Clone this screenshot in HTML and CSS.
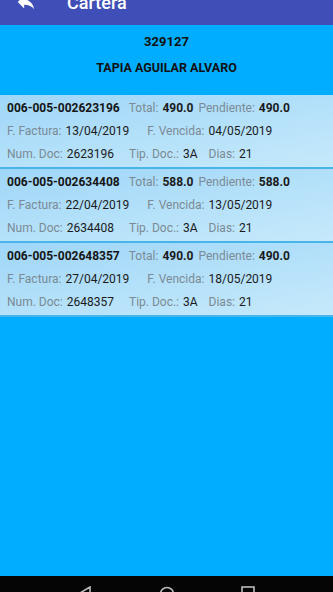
FILE: index.html
```
<!DOCTYPE html>
<html>
<head>
<meta charset="utf-8">
<link rel="stylesheet" href="styles.css">
</head>
<body>
<div class="screen">
  <header class="toolbar">
    <svg class="back" width="22" height="22" viewBox="0 0 24 24"><path d="M10 9V5l-7 7 7 7v-4.1c5 0 8.5 1.6 11 5.1-1-5-4-10-11-11z" fill="#fff"/></svg>
    <span class="title">Cartera</span>
  </header>
  <main class="content">
    <div class="client">
      <div class="client-id">329127</div>
      <div class="client-name">TAPIA AGUILAR ALVARO</div>
    </div>
    <div class="list">
      <div class="card">
        <div class="row">
          <span class="code">006-005-002623196</span>
          <span class="lbl m1">Total:</span><span class="val b">490.0</span>
          <span class="lbl m2">Pendiente:</span><span class="val b">490.0</span>
        </div>
        <div class="row">
          <span class="lbl">F. Factura:</span><span class="val">13/04/2019</span>
          <span class="lbl m3">F. Vencida:</span><span class="val">04/05/2019</span>
        </div>
        <div class="row">
          <span class="lbl">Num. Doc:</span><span class="val">2623196</span>
          <span class="lbl m4">Tip. Doc.:</span><span class="val">3A</span>
          <span class="lbl m5">Dias:</span><span class="val">21</span>
        </div>
      </div>
      <div class="card">
        <div class="row">
          <span class="code">006-005-002634408</span>
          <span class="lbl m1">Total:</span><span class="val b">588.0</span>
          <span class="lbl m2">Pendiente:</span><span class="val b">588.0</span>
        </div>
        <div class="row">
          <span class="lbl">F. Factura:</span><span class="val">22/04/2019</span>
          <span class="lbl m3">F. Vencida:</span><span class="val">13/05/2019</span>
        </div>
        <div class="row">
          <span class="lbl">Num. Doc:</span><span class="val">2634408</span>
          <span class="lbl m4">Tip. Doc.:</span><span class="val">3A</span>
          <span class="lbl m5">Dias:</span><span class="val">21</span>
        </div>
      </div>
      <div class="card">
        <div class="row">
          <span class="code">006-005-002648357</span>
          <span class="lbl m1">Total:</span><span class="val b">490.0</span>
          <span class="lbl m2">Pendiente:</span><span class="val b">490.0</span>
        </div>
        <div class="row">
          <span class="lbl">F. Factura:</span><span class="val">27/04/2019</span>
          <span class="lbl m3">F. Vencida:</span><span class="val">18/05/2019</span>
        </div>
        <div class="row">
          <span class="lbl">Num. Doc:</span><span class="val">2648357</span>
          <span class="lbl m4">Tip. Doc.:</span><span class="val">3A</span>
          <span class="lbl m5">Dias:</span><span class="val">21</span>
        </div>
      </div>
    </div>
  </main>
  <nav class="navbar">
    <svg class="nav-icon" width="14" height="14" viewBox="0 0 14 14"><path d="M12 1 L2 7 L12 13 Z" fill="none" stroke="#bbb" stroke-width="1.6"/></svg>
    <svg class="nav-icon" width="16" height="16" viewBox="0 0 16 16"><circle cx="8" cy="8" r="6.5" fill="none" stroke="#bbb" stroke-width="1.6"/></svg>
    <svg class="nav-icon" width="14" height="14" viewBox="0 0 14 14"><rect x="1" y="1" width="12" height="12" fill="none" stroke="#bbb" stroke-width="1.6"/></svg>
  </nav>
</div>
</body>
</html>
```
FILE: styles.css
```
* { box-sizing: border-box; }
html, body { margin: 0; padding: 0; }
body {
  width: 333px;
  height: 592px;
  overflow: hidden;
  font-family: Roboto, "Noto Sans", sans-serif;
  background: #00aeff;
}
.screen {
  display: flex;
  flex-direction: column;
  height: 592px;
}
.toolbar {
  height: 25px;
  flex: 0 0 25px;
  background: #3f4fb7;
  display: flex;
  align-items: flex-end;
  overflow: hidden;
  padding-left: 15px;
  padding-bottom: 17px;
}
.back { flex: 0 0 auto; margin-bottom: -5px; }
.title {
  color: #fff;
  font-size: 18px;
  font-weight: 500;
  line-height: 18px;
  margin-left: 30px;
  margin-bottom: -4px;
}
.content {
  flex: 1 1 auto;
  background: #00adfe;
}
.client {
  padding-top: 9px;
  text-align: center;
  color: #111;
  font-weight: 700;
  font-size: 13px;
}
.client-id { line-height: 15px; }
.client-name { margin-top: 11px; line-height: 15px; font-size: 12.5px; }
.list { margin-top: 20px; }
.card {
  background: linear-gradient(170deg, #9fd6f8 0%, #b7e2fa 60%, #c6e9fb 100%);
  border-bottom: 2px solid #47b4ea;
  padding: 6px 0 1px 7px;
  height: 74px;
}
.row {
  display: flex;
  align-items: baseline;
  height: 23px;
  line-height: 15px;
  font-size: 12px;
  white-space: nowrap;
}
.code { font-weight: 700; color: #151515; }
.lbl { color: #7b8a94; margin-right: 4px; }
.val { color: #1a1a1a; }
.b { font-weight: 700; }
.m1 { margin-left: 9px; }
.m2 { margin-left: 5px; }
.m3 { margin-left: 18px; }
.m4 { margin-left: 15px; }
.m5 { margin-left: 11px; }
.navbar {
  flex: 0 0 16px;
  height: 16px;
  background: #050505;
  display: flex;
  justify-content: space-between;
  align-items: flex-start;
  padding: 10px 78px 0 78px;
  overflow: hidden;
}
.nav-icon { flex: 0 0 auto; }
```
